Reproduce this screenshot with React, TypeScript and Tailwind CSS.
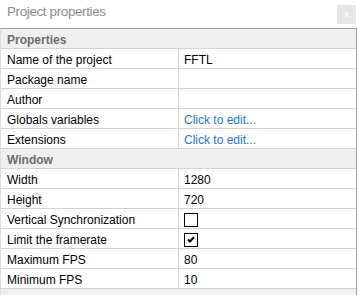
import React from 'react';

type Row = { label: string; value?: string; kind?: 'text' | 'link' | 'check' | 'uncheck' };

const properties: Row[] = [
  { label: 'Name of the project', value: 'FFTL' },
  { label: 'Package name' },
  { label: 'Author' },
  { label: 'Globals variables', value: 'Click to edit...', kind: 'link' },
  { label: 'Extensions', value: 'Click to edit...', kind: 'link' },
];

const windowRows: Row[] = [
  { label: 'Width', value: '1280' },
  { label: 'Height', value: '720' },
  { label: 'Vertical Synchronization', kind: 'uncheck' },
  { label: 'Limit the framerate', kind: 'check' },
  { label: 'Maximum FPS', value: '80' },
  { label: 'Minimum FPS', value: '10' },
];

function Section({ title }: { title: string }) {
  return (
    <div className="flex h-[20px] items-center border-b border-[#d6d3ce] bg-[#efefef] pl-[6px] pt-[2px] text-[12px] font-bold text-[#6d6d6d]">
      {title}
    </div>
  );
}

function PropRow({ row }: { row: Row }) {
  return (
    <div className="flex h-[20px] border-b border-[#d6d3ce] bg-white text-[12px] text-black">
      <div className="flex w-[178px] shrink-0 items-center border-r border-[#d6d3ce] pl-[6px] pt-[2px]">{row.label}</div>
      <div className="flex flex-1 items-center pl-[5px] pt-[2px]">
        {row.kind === 'link' && <span className="text-[#2a74d4]">{row.value}</span>}
        {(row.kind === 'check' || row.kind === 'uncheck') && (
          <span className="flex h-[14px] w-[14px] items-center justify-center border border-black bg-white">
            {row.kind === 'check' && (
              <svg width="8" height="7" viewBox="0 0 8 7">
                <path d="M1 3.5 L3 5.5 L7 1" stroke="black" strokeWidth="2" fill="none" />
              </svg>
            )}
          </span>
        )}
        {!row.kind && row.value && <span>{row.value}</span>}
      </div>
    </div>
  );
}

export default function App() {
  return (
    <div className="h-[295px] w-[358px] overflow-hidden bg-white" style={{ fontFamily: '"Liberation Sans", Arial, sans-serif' }}>
      <div className="flex h-[28px] items-start justify-between pl-[7px] pr-[2px] pt-[4px]">
        <span className="text-[13.5px] leading-[16px] tracking-[-0.4px] text-[#8c8c8c]">Project properties</span>
        <span className="mt-[1px] flex h-[19px] w-[19px] items-center justify-center bg-[#e6e6e6] text-[9px] font-bold text-[#f8f8f8]">x</span>
      </div>
      <div className="mr-[1px] h-[267px] border-l border-r border-t border-l-[#dcdcdc] border-r-[#a0a0a0] border-t-[#a0a0a0] bg-[#efefef]">
        <Section title="Properties" />
        {properties.map((r) => (
          <PropRow key={r.label} row={r} />
        ))}
        <Section title="Window" />
        {windowRows.map((r) => (
          <PropRow key={r.label} row={r} />
        ))}
      </div>
    </div>
  );
}
